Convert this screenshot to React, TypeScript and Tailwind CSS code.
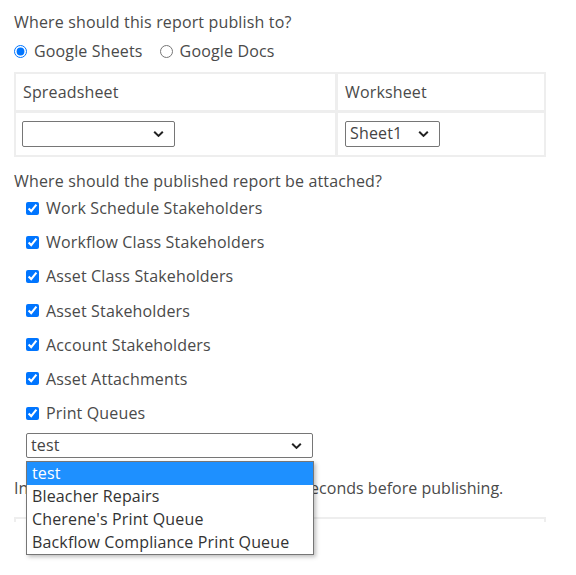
import { useState } from 'react';

const attachTo = [
  'Work Schedule Stakeholders',
  'Workflow Class Stakeholders',
  'Asset Class Stakeholders',
  'Asset Stakeholders',
  'Account Stakeholders',
  'Asset Attachments',
  'Print Queues',
];

const queues = ['test', 'Bleacher Repairs', "Cherene's Print Queue", 'Backflow Compliance Print Queue'];

function Chevron() {
  return (
    <svg width="11" height="7" viewBox="0 0 11 7" className="pointer-events-none absolute right-[10px] top-1/2 -translate-y-1/2">
      <path d="M1.2 1.2 L5.5 5.4 L9.8 1.2" fill="none" stroke="#222" strokeWidth="2" />
    </svg>
  );
}

function FakeSelect({ value, className }: { value: string; className: string }) {
  return (
    <div className={`relative border border-[#767676] rounded-[2px] bg-white ${className}`}>
      <div className="pl-[4px] leading-[23px] text-[#444]">{value}</div>
      <Chevron />
    </div>
  );
}

export default function App() {
  const [target, setTarget] = useState('sheets');

  return (
    <div className="min-h-[575px] bg-white text-[16px] tracking-[0.15px] text-[#4a4a4a] font-['Open_Sans',sans-serif] px-[14px] pt-[10px]">
      <p className="leading-6">Where should this report publish to?</p>
      <div className="flex items-center h-6 mt-[5px]">
        <label className="flex items-center">
          <input
            type="radio"
            name="target"
            checked={target === 'sheets'}
            onChange={() => setTarget('sheets')}
            className="m-0 w-[13px] h-[13px] accent-[#0075ff]"
          />
          <span className="ml-[7px]">Google Sheets</span>
        </label>
        <label className="flex items-center ml-[17px]">
          <input
            type="radio"
            name="target"
            checked={target === 'docs'}
            onChange={() => setTarget('docs')}
            className="m-0 w-[13px] h-[13px]"
          />
          <span className="ml-[7px]">Google Docs</span>
        </label>
      </div>

      <div className="mt-[9px] grid grid-cols-[319px_206px] grid-rows-[36px_42px] gap-[3px] p-[2px] bg-[#eeeeee] w-[532px]">
        <div className="bg-white px-[7px] flex items-center">Spreadsheet</div>
        <div className="bg-white px-[7px] flex items-center">Worksheet</div>
        <div className="bg-white px-[6px] flex items-center">
          <FakeSelect value="" className="w-[153px] h-[26px]" />
        </div>
        <div className="bg-white px-[7px] flex items-center">
          <FakeSelect value="Sheet1" className="w-[95px] h-[26px]" />
        </div>
      </div>

      <p className="leading-6 mt-[12px]">Where should the published report be attached?</p>
      <div className="flex flex-col gap-[10.2px] mt-[3px] pl-[12px]">
        {attachTo.map((label) => (
          <label key={label} className="flex items-center h-6">
            <input type="checkbox" defaultChecked className="m-0 w-[13px] h-[13px] accent-[#0075ff]" />
            <span className="ml-[7px]">{label}</span>
          </label>
        ))}
      </div>

      <div className="relative ml-[12px] mt-[8px] w-[287px]">
        <FakeSelect value="test" className="w-[287px] h-[25px]" />
        <div className="absolute left-0 top-[28px] w-[288px] border border-[#767676] bg-white shadow-[2px_2px_4px_rgba(0,0,0,0.25)] z-10">
          {queues.map((q, i) => (
            <div
              key={q}
              className={`h-[23px] leading-[23px] pl-[5px] ${i === 0 ? 'bg-[#1e90ff] text-white' : 'text-[#333]'}`}
            >
              {q}
            </div>
          ))}
        </div>
      </div>

      <p className="leading-6 mt-[18px] whitespace-nowrap tracking-[0.02px]">Include a brief wait of a set number of seconds before publishing.</p>

      <div className="mt-[17px] w-[532px] h-[5px] border-x-[2px] border-t-[2px] border-[#eeeeee]"></div>
    </div>
  );
}
